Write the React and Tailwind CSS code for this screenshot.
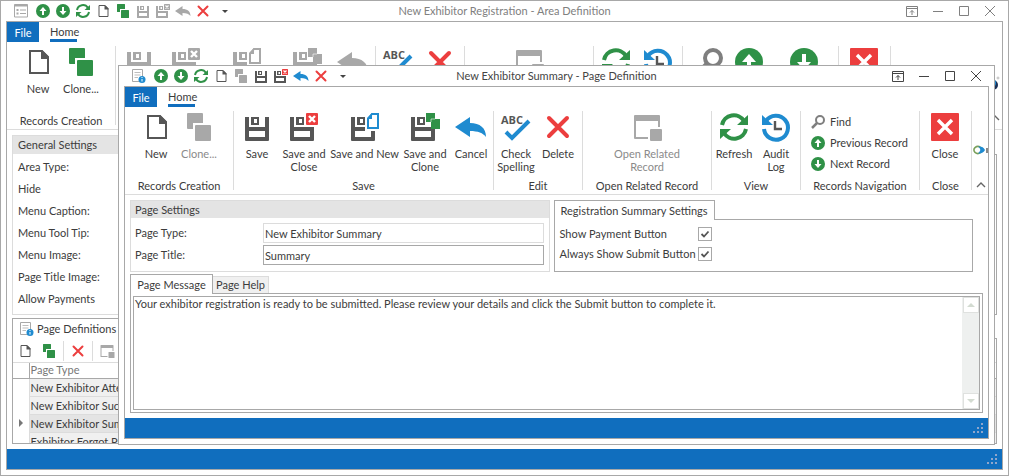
import clsx from 'clsx'

const GREEN = '#2f9147'
const BLUE = '#1f8bd0'
const RED = '#ec3e3e'
const DARK = '#565656'
const MUTED = '#a8a8a8'

function NewIcon({ disabled }) {
  const c = disabled ? MUTED : DARK
  return (
    <>
      <path d="M6 3h12l6 6v16H6z" fill="none" stroke={c} strokeWidth="2" />
      <path d="M17 2h1l7 7v2h-8z" fill={c} />
    </>
  )
}

function CloneIcon({ disabled }) {
  const c = disabled ? MUTED : GREEN
  return (
    <>
      <path d="M2 1q0-1 1-1h14q1 0 1 1v9H8v6H3q-1 0-1-1z" fill={c} />
      <rect x="10" y="12" width="16" height="16" rx="1" fill={c} />
    </>
  )
}

function Floppy({ x = 0, color }) {
  return (
    <g transform={`translate(${x} 0)`} fill={color}>
      <path fillRule="evenodd" d="M0 4h4v10h16V4h4v23q0 1-1 1H1q-1 0-1-1zM4 18v6h16v-6z" />
      <path fillRule="evenodd" d="M6 4h8v8H6zM9 6v4h3V6z" />
    </g>
  )
}

function SaveIcon({ disabled }) {
  return <Floppy x={2} color={disabled ? MUTED : DARK} />
}

function SaveCloseIcon({ disabled }) {
  return (
    <>
      <Floppy color={disabled ? MUTED : DARK} />
      <path d="M14 0h14v14H14z" fill="#fff" />
      <rect x="16" width="12" height="12" rx="1" fill={disabled ? MUTED : RED} />
      <path d="M19 3l6 6M25 3l-6 6" stroke="#fff" strokeWidth="2.4" />
    </>
  )
}

function SaveNewIcon({ disabled }) {
  const c = disabled ? MUTED : BLUE
  return (
    <>
      <Floppy color={disabled ? MUTED : DARK} />
      <path d="M14 0h14v18H14z" fill="#fff" />
      <path d="M21 1h6v14H17V6z" fill="none" stroke={c} strokeWidth="2" />
      <path d="M16 5l5-5v6h-5z" fill={c} />
    </>
  )
}

function SaveCloneIcon({ disabled }) {
  const c = disabled ? MUTED : GREEN
  return (
    <>
      <Floppy color={disabled ? MUTED : DARK} />
      <path d="M20 4h4v12h-4z" fill="#fff" />
      <path d="M15 0h9v6h5v10h-9v-7h-5z" fill={c} />
      <path d="M20 9V6h4" fill="none" stroke="#fff" strokeWidth="0.6" />
    </>
  )
}

function UndoIcon({ disabled }) {
  return (
    <path
      d="M-2 14L13 4v6c10 0 16 5 16 14c-3-4-8-6-16-6v6z"
      fill={disabled ? MUTED : BLUE}
    />
  )
}

function SpellIcon() {
  return (
    <>
      <text x="-1" y="11" fontSize="11" fontWeight="700" fontFamily="Open Sans" fill={DARK}>ABC</text>
      <path d="M4 19l6 6L27 8" fill="none" stroke={BLUE} strokeWidth="4" />
    </>
  )
}

function DeleteIcon() {
  return <path d="M5 5l18 18M23 5L5 23" stroke={RED} strokeWidth="4" strokeLinecap="round" />
}

function RelatedIcon() {
  return (
    <>
      <path d="M1 3q0-1 1-1h24q1 0 1 1v11h-2V8H3v16h12v2H2q-1 0-1-1z" fill={MUTED} />
      <rect x="17" y="16" width="12" height="12" rx="1" fill={MUTED} />
    </>
  )
}

function RefreshIcon() {
  return (
    <g fill="none" stroke={GREEN} strokeWidth="4">
      <path d="M2 12A12 12 0 0 1 24 8" />
      <path d="M26 16A12 12 0 0 1 4 20" />
      <path d="M28 2v10H17zM0 26V16h11z" fill={GREEN} stroke="none" />
    </g>
  )
}

function AuditIcon() {
  return (
    <>
      <path d="M4 8A12 12 0 1 1 2 16" fill="none" stroke={BLUE} strokeWidth="4" />
      <path d="M0 2v10h11z" fill={BLUE} />
      <path d="M13 8v8h7" fill="none" stroke={DARK} strokeWidth="2.4" />
    </>
  )
}

function FindIcon() {
  return (
    <g fill="none" stroke="#7f7f7f">
      <circle cx="18" cy="10" r="8" strokeWidth="4" />
      <path d="M12 16L2 26" strokeWidth="5" />
    </g>
  )
}

function UpIcon() {
  return (
    <>
      <circle cx="14" cy="14" r="14" fill={GREEN} />
      <path d="M14 6l7 8h-5v8h-4v-8H7z" fill="#fff" />
    </>
  )
}

function DownIcon() {
  return (
    <>
      <circle cx="14" cy="14" r="14" fill={GREEN} />
      <path d="M14 22l7-8h-5V6h-4v8H7z" fill="#fff" />
    </>
  )
}

function CloseIcon() {
  return (
    <>
      <rect width="28" height="28" rx="1" fill={RED} />
      <path d="M7 7l14 14M21 7L7 21" stroke="#fff" strokeWidth="3.4" />
    </>
  )
}

function PageInfoIcon() {
  return (
    <>
      <path d="M1 1h20v24H1z" fill="#fff" stroke={MUTED} strokeWidth="2" />
      <path d="M5 7h12M5 12h12M5 17h7" stroke="#bdbdbd" strokeWidth="2" />
      <circle cx="20" cy="21" r="7" fill={BLUE} />
      <path d="M20 16v2M20 20v5" stroke="#fff" strokeWidth="2" />
    </>
  )
}

function FormIcon() {
  return (
    <g stroke={MUTED} strokeWidth="2">
      <path d="M1 1h26v25H1z" fill="none" />
      <path d="M1 3h26" strokeWidth="4" />
      <path d="M5 12h4M5 19h4" strokeWidth="4" />
      <path d="M12 12h12M12 19h12" />
    </g>
  )
}

function Icon({ as: Glyph, size = 'size-7', disabled }) {
  return (
    <svg viewBox="0 0 28 28" className={clsx(size, 'shrink-0 overflow-visible')} aria-hidden="true">
      <Glyph disabled={disabled} />
    </svg>
  )
}

function IconButton({ icon, label, disabled, className = 'w-5' }) {
  return (
    <button type="button" aria-label={label} disabled={disabled} className={clsx('flex h-5 items-center justify-center', className)}>
      <Icon as={icon} size="size-[14px]" disabled={disabled} />
    </button>
  )
}

function BigButton({ icon, label, lines = [], disabled, width }) {
  return (
    <button
      type="button"
      aria-label={label}
      disabled={disabled}
      className={clsx('flex flex-col items-center pt-0.5', width, disabled && 'text-[#8a8a8a]')}
    >
      <Icon as={icon} disabled={disabled} />
      <span className="mt-1.5 flex flex-col items-center leading-[13px] whitespace-nowrap">
        {lines.map((line) => <span key={line}>{line}</span>)}
      </span>
    </button>
  )
}

function Group({ title, width, className, children }) {
  return (
    <section className={clsx('flex h-[79px] shrink-0 flex-col border-r border-[#dcdcdc]', width)}>
      <div className={clsx('flex flex-1 items-start', className)}>{children}</div>
      {title && <h2 className="text-center leading-[9px] whitespace-nowrap">{title}</h2>}
    </section>
  )
}

function SmallCommand({ icon, label }) {
  return (
    <button type="button" className="flex h-[21px] items-center gap-[5px] whitespace-nowrap">
      <Icon as={icon} size="size-[14px]" />
      {label}
    </button>
  )
}

function Chevron() {
  return (
    <svg viewBox="0 0 10 6" className="h-1.5 w-2.5" fill="none" stroke="#666" strokeWidth="1.4" aria-hidden="true">
      <path d="M1 5l4-4 4 4" />
    </svg>
  )
}

function Ribbon({ children }) {
  return (
    <header className="border-b border-[#dcdcdc]">
      <nav className="flex h-5">
        <button type="button" className="w-8 bg-[#106ebe] pt-0.5 text-white">File</button>
        <a href="#home" className="ml-[11px] w-[27px] border-b-3 border-[#106ebe] pt-0.5 text-center leading-[15px]">Home</a>
      </nav>
      <div className="flex py-1">{children}</div>
    </header>
  )
}

function QuickAccess({ icon, child }) {
  return (
    <div className="flex items-center pl-2">
      <IconButton icon={icon} label="Window menu" className="w-6" />
      <IconButton icon={UpIcon} label="Previous record" />
      <IconButton icon={DownIcon} label="Next record" />
      <IconButton icon={RefreshIcon} label="Refresh" />
      <IconButton icon={NewIcon} label="New" />
      <IconButton icon={CloneIcon} label="Clone" disabled={child} />
      <IconButton icon={SaveIcon} label="Save" disabled={!child} />
      <IconButton icon={SaveCloseIcon} label="Save and close" disabled={!child} />
      <IconButton icon={UndoIcon} label="Cancel" disabled={!child} />
      <IconButton icon={DeleteIcon} label="Delete" />
      <button type="button" aria-label="Customize toolbar" className="flex h-5 w-6 items-center justify-center">
        <svg viewBox="0 0 6 3" className="h-[3px] w-1.5" aria-hidden="true"><path d="M0 0h6L3 3z" fill="#444" /></svg>
      </button>
    </div>
  )
}

const windowButtons = [
  { label: 'Ribbon display options', d: 'M.5 1.5h11v10H.5zM.5 3.5h11M6 10V5.5M4 7.5l2-2 2 2' },
  { label: 'Minimize', d: 'M1 6.5h10' },
  { label: 'Maximize', d: 'M1.5 1.5h9v9h-9z' },
  { label: 'Close window', d: 'M1 1l10 10M11 1L1 11' },
]

function Window({ title, icon, child, className, children }) {
  return (
    <section className={clsx('flex flex-col border border-[#a8a8a8] bg-white px-[5px] pb-[5px]', className)}>
      <div className={clsx('-mx-[5px] grid h-5 grid-cols-[1fr_auto_1fr] items-center', child ? 'text-[#444]' : 'text-[#808080]')}>
        <QuickAccess icon={icon} child={child} />
        <h1>{title}</h1>
        <div className="flex justify-end pr-[5px]">
          {windowButtons.map((b) => (
            <button key={b.label} type="button" aria-label={b.label} className="flex h-5 w-[26px] items-center justify-center">
              <svg viewBox="0 0 12 12" className="size-3" fill="none" stroke="currentColor" aria-hidden="true">
                <path d={b.d} />
              </svg>
            </button>
          ))}
        </div>
      </div>
      <div className="flex min-h-0 flex-1 flex-col border border-[#a8a8a8]">
        {children}
        <footer className="flex h-5 shrink-0 items-end justify-end bg-[#106ebe] p-[5px]">
          <svg viewBox="0 0 10 10" className="size-2.5" fill="#8fa6cc" aria-hidden="true">
            <path d="M8 0h2v2H8zM8 4h2v2H8zM4 4h2v2H4zM8 8h2v2H8zM4 8h2v2H4zM0 8h2v2H0z" />
          </svg>
        </footer>
      </div>
    </section>
  )
}

const areaFields = [
  { id: 'area-type', label: 'Area Type:' },
  { id: 'hide', label: 'Hide', type: 'checkbox' },
  { id: 'menu-caption', label: 'Menu Caption:' },
  { id: 'menu-tip', label: 'Menu Tool Tip:' },
  { id: 'menu-image', label: 'Menu Image:' },
  { id: 'title-image', label: 'Page Title Image:' },
  { id: 'allow-payments', label: 'Allow Payments', type: 'checkbox' },
]

const pageTypes = [
  'New Exhibitor Attendee',
  'New Exhibitor Success',
  'New Exhibitor Summary',
  'Exhibitor Forgot Password',
]

function AreaWindow() {
  return (
    <Window title="New Exhibitor Registration - Area Definition" icon={FormIcon} className="h-full">
      <Ribbon>
        <Group title="Records Creation" width="w-[109px]" className="pl-[11px]">
          <BigButton icon={NewIcon} lines={['New']} width="w-10" />
          <BigButton icon={CloneIcon} lines={['Clone...']} width="w-[46px]" />
        </Group>
        <Group width="w-[260px]">
          <BigButton icon={SaveIcon} label="Save" disabled width="w-[46px]" />
          <BigButton icon={SaveCloseIcon} label="Save and close" disabled width="w-12" />
          <BigButton icon={SaveNewIcon} label="Save and new" disabled width="w-[73px]" />
          <BigButton icon={SaveCloneIcon} label="Save and clone" disabled width="w-12" />
          <BigButton icon={UndoIcon} label="Cancel" disabled width="w-11" />
        </Group>
        <Group width="w-[89px]">
          <BigButton icon={SpellIcon} label="Check spelling" width="w-11" />
          <BigButton icon={DeleteIcon} label="Delete" width="w-10" />
        </Group>
        <Group width="w-[129px]" className="justify-center">
          <BigButton icon={RelatedIcon} label="Open related record" disabled />
        </Group>
        <Group width="w-[89px]">
          <BigButton icon={RefreshIcon} label="Refresh" width="w-11" />
          <BigButton icon={AuditIcon} label="Audit log" width="w-10" />
        </Group>
        <Group width="w-[156px]" className="pl-2">
          <BigButton icon={FindIcon} label="Find" width="w-9" />
          <BigButton icon={UpIcon} label="Previous record" width="w-11" />
          <BigButton icon={DownIcon} label="Next record" width="w-[66px]" />
        </Group>
        <Group width="w-[52px]">
          <BigButton icon={CloseIcon} label="Close" width="w-[50px]" />
        </Group>
        <div className="flex h-[79px] flex-1 flex-col items-end justify-between pt-[30px] pr-0.5 pb-1">
          <svg viewBox="0 0 16 16" className="size-4" aria-hidden="true">
            <circle cx="9" cy="9" r="5" fill="#1a2f55" />
            <circle cx="8" cy="7" r="4" fill={BLUE} />
            <circle cx="14" cy="2" r="1" fill="none" stroke="#999" strokeWidth="0.6" />
          </svg>
          <Chevron />
        </div>
      </Ribbon>
      <main className="flex min-h-0 flex-1 flex-col gap-[3px] p-[5px]">
        <div className="grid grid-cols-2 gap-1">
          <fieldset className="border border-[#dcdcdc] pb-1">
            <h2 className="bg-[#e4e4e4] px-[5px] leading-[18px]">General Settings</h2>
            <div className="pt-[2px]">
              {areaFields.map((f) => (
                <div key={f.id} className="flex h-[22px] items-center px-[5px]">
                  <label htmlFor={f.id} className="w-32">{f.label}</label>
                  <input id={f.id} type={f.type || 'text'} className={clsx('border border-[#a8a8a8]', !f.type && 'h-5 flex-1')} />
                </div>
              ))}
            </div>
          </fieldset>
          <div className="flex flex-col">
            <div className="h-[19px] w-40 border border-b-0 border-[#a8a8a8]" />
            <div className="flex-1 border border-[#a8a8a8]" />
          </div>
        </div>
        <div className="flex min-h-0 flex-1 flex-col">
          <div className="flex border-b border-[#a8a8a8]">
            <button type="button" className="-mb-px flex h-[21px] w-28 items-center gap-[3px] border border-b-0 border-[#a8a8a8] bg-white pl-[7px] whitespace-nowrap">
              <Icon as={PageInfoIcon} size="size-[14px]" />
              Page Definitions
            </button>
          </div>
          <div className="min-h-0 flex-1 overflow-hidden border border-t-0 border-[#a8a8a8]">
            <div className="flex h-6 items-center border-b border-[#dcdcdc]">
              <IconButton icon={NewIcon} label="New page" className="w-6" />
              <IconButton icon={CloneIcon} label="Clone page" className="w-6" />
              <span className="ml-0.5 h-5 border-l border-[#dcdcdc]" />
              <IconButton icon={DeleteIcon} label="Delete page" className="w-7" />
              <span className="h-5 border-l border-[#dcdcdc]" />
              <IconButton icon={RelatedIcon} label="Open page" disabled className="w-7" />
            </div>
            <table className="w-full border-collapse">
              <thead>
                <tr className="h-[15px] border-b border-[#a8a8a8] text-left text-[#777]">
                  <th className="w-4 border-r border-[#a8a8a8] p-0" aria-label="Current row" />
                  <th className="p-0 pl-px font-normal leading-[14px]">Page Type</th>
                </tr>
              </thead>
              <tbody>
                {pageTypes.map((name, i) => (
                  <tr key={name} className="h-[18px]">
                    <td className="border-r border-[#dcdcdc] p-0">
                      {i === 2 && (
                        <svg viewBox="0 0 4 8" className="ml-1.5 h-2 w-1" aria-hidden="true"><path d="M0 0l4 4-4 4z" fill="#777" /></svg>
                      )}
                    </td>
                    <td className={clsx('border-b border-[#dcdcdc] p-0 pl-px leading-[17px]', i === 2 ? 'bg-[#e4e4e4]' : 'bg-[#f0f0f0]')}>{name}</td>
                  </tr>
                ))}
              </tbody>
            </table>
          </div>
        </div>
      </main>
    </Window>
  )
}

function CheckRow({ id, label }) {
  return (
    <div className="flex h-5 items-center">
      <label htmlFor={id} className="w-[138px] whitespace-nowrap">{label}</label>
      <span className="grid size-[14px]">
        <input id={id} type="checkbox" defaultChecked className="col-start-1 row-start-1 size-[14px] appearance-none border border-[#a8a8a8] bg-white" />
        <svg viewBox="0 0 14 14" className="pointer-events-none col-start-1 row-start-1" fill="none" stroke="#555" strokeWidth="1.8" aria-hidden="true">
          <path d="M3.5 7l2.5 2.5 4.5-5" />
        </svg>
      </span>
    </div>
  )
}

function ScrollButton({ label, d }) {
  return (
    <button type="button" aria-label={label} className="flex size-4 items-center justify-center border border-[#dfe1df] bg-white">
      <svg viewBox="0 0 8 4" className="h-1 w-2" aria-hidden="true"><path d={d} fill="#d3dbd1" /></svg>
    </button>
  )
}

function PageWindow() {
  return (
    <Window
      title="New Exhibitor Summary - Page Definition"
      icon={PageInfoIcon}
      child
      className="absolute top-[65px] right-[14px] bottom-[31px] left-[118px]"
    >
      <Ribbon>
        <Group title="Records Creation" width="w-[109px]" className="pl-[11px]">
          <BigButton icon={NewIcon} lines={['New']} width="w-10" />
          <BigButton icon={CloneIcon} lines={['Clone...']} disabled width="w-[46px]" />
        </Group>
        <Group title="Save" width="w-[260px]">
          <BigButton icon={SaveIcon} lines={['Save']} width="w-[46px]" />
          <BigButton icon={SaveCloseIcon} lines={['Save and', 'Close']} width="w-12" />
          <BigButton icon={SaveNewIcon} lines={['Save and New']} width="w-[73px]" />
          <BigButton icon={SaveCloneIcon} lines={['Save and', 'Clone']} width="w-12" />
          <BigButton icon={UndoIcon} lines={['Cancel']} width="w-11" />
        </Group>
        <Group title="Edit" width="w-[89px]">
          <BigButton icon={SpellIcon} lines={['Check', 'Spelling']} width="w-11" />
          <BigButton icon={DeleteIcon} lines={['Delete']} width="w-10" />
        </Group>
        <Group title="Open Related Record" width="w-[129px]" className="justify-center">
          <BigButton icon={RelatedIcon} lines={['Open Related', 'Record']} disabled />
        </Group>
        <Group title="View" width="w-[89px]">
          <BigButton icon={RefreshIcon} lines={['Refresh']} width="w-11" />
          <BigButton icon={AuditIcon} lines={['Audit', 'Log']} width="w-10" />
        </Group>
        <Group title="Records Navigation" width="w-[119px]" className="flex-col pl-2.5">
          <SmallCommand icon={FindIcon} label="Find" />
          <SmallCommand icon={UpIcon} label="Previous Record" />
          <SmallCommand icon={DownIcon} label="Next Record" />
        </Group>
        <Group title="Close" width="w-[52px]">
          <BigButton icon={CloseIcon} lines={['Close']} width="w-[50px]" />
        </Group>
        <div className="flex h-[79px] flex-1 flex-col items-end justify-between pt-[34px] pb-[2px]">
          <svg viewBox="0 0 15 10" className="h-2.5 w-[15px]" fill="none" aria-hidden="true">
            <path d="M7.5 2.4A4 3.4 0 1 0 7.5 7.6" stroke="#7aa05a" strokeWidth="1.6" />
            <path d="M5 1.6q2 1.4 2.4 3.4q-.6 2-2.4 3.4q5 .6 7-3.4q-2-4-7-3.4z" fill={BLUE} />
            <path d="M14 3v5" stroke="#555" strokeWidth="1.4" />
          </svg>
          <span className="mr-0.5"><Chevron /></span>
        </div>
      </Ribbon>
      <main className="flex min-h-0 flex-1 flex-col gap-[2px] p-[5px]">
        <div className="grid h-[72px] grid-cols-2 gap-1 pr-2.5">
          <fieldset className="border border-[#dcdcdc]">
            <h2 className="bg-[#e4e4e4] px-1 leading-[17px]">Page Settings</h2>
            <div className="grid grid-cols-[128px_1fr] items-center gap-y-0.5 pt-[5px] pr-[5px] pl-1">
              <label htmlFor="page-type">Page Type:</label>
              <input id="page-type" readOnly defaultValue="New Exhibitor Summary" className="h-5 w-full border border-[#dcdcdc] px-px" />
              <label htmlFor="page-title">Page Title:</label>
              <input id="page-title" defaultValue="Summary" className="h-5 w-full border border-[#a8a8a8] px-px" />
            </div>
          </fieldset>
          <div className="flex flex-col">
            <button type="button" className="z-10 -mb-px h-5 w-[161px] border border-b-0 border-[#a8a8a8] bg-white">Registration Summary Settings</button>
            <div className="flex-1 border border-[#a8a8a8] pt-1 pl-[5px]">
              <CheckRow id="show-payment" label="Show Payment Button" />
              <CheckRow id="show-submit" label="Always Show Submit Button" />
            </div>
          </div>
        </div>
        <div className="flex min-h-0 flex-1 flex-col">
          <div role="tablist" className="z-10 -mb-px flex items-end">
            <button type="button" role="tab" aria-selected="true" className="h-5 w-[83px] border border-b-0 border-[#a8a8a8] bg-white">Page Message</button>
            <button type="button" role="tab" aria-selected="false" className="mb-px h-[17px] w-14 border border-b-0 border-l-0 border-[#dcdcdc] bg-[#f0f0f0]">Page Help</button>
          </div>
          <div className="min-h-0 flex-1 border border-[#a8a8a8] p-[2px]">
            <div className="flex h-full border border-[#a8a8a8]">
              <textarea
                aria-label="Page Message"
                className="flex-1 resize-none overflow-hidden px-px outline-none"
                defaultValue="Your exhibitor registration is ready to be submitted. Please review your details and click the Submit button to complete it."
              />
              <div className="flex w-[17px] flex-col items-center justify-between bg-[#eef0ef]">
                <ScrollButton label="Scroll up" d="M0 4h8L4 0z" />
                <ScrollButton label="Scroll down" d="M0 0h8L4 4z" />
              </div>
            </div>
          </div>
        </div>
      </main>
    </Window>
  )
}

export default function App() {
  return (
    <div className="relative h-screen min-h-[440px] overflow-hidden bg-white text-[11px] leading-[14px] text-[#3c3c3c] [font-family:Lato,sans-serif]">
      <AreaWindow />
      <PageWindow />
    </div>
  )
}
